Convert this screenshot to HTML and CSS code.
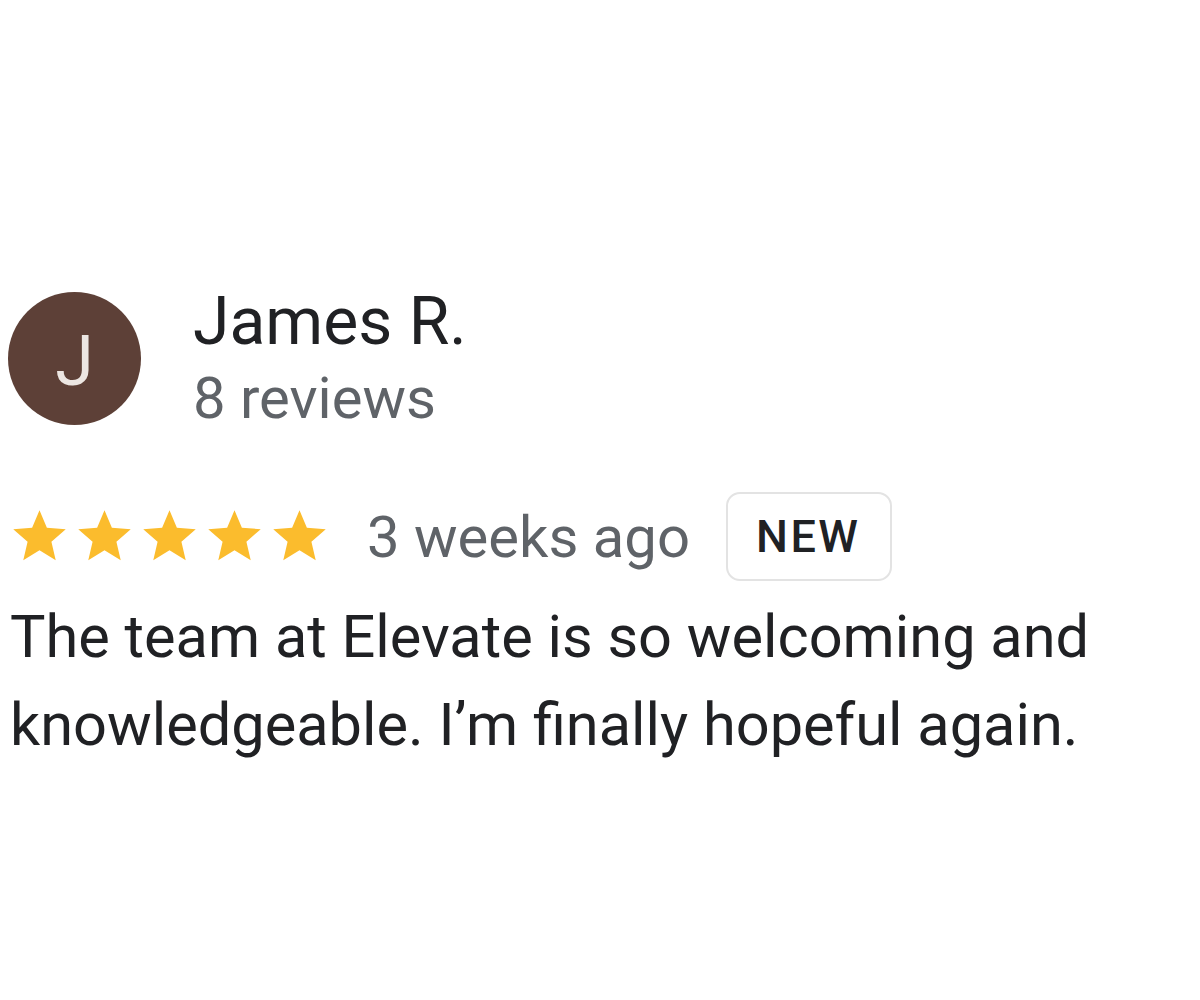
FILE: index.html
```html
<!DOCTYPE html>
<html>
<head>
<meta charset="utf-8">
<link rel="stylesheet" href="styles.css">
</head>
<body>
<div class="review">
  <div class="author">
    <div class="avatar">J</div>
    <div class="author-info">
      <div class="name">James R.</div>
      <div class="count">8 reviews</div>
    </div>
  </div>
  <div class="meta">
    <div class="stars">
      <svg class="star" viewBox="0 0 24 24"><path d="M12 17.27L18.18 21l-1.64-7.03L22 9.24l-7.19-.61L12 2 9.19 8.63 2 9.24l5.46 4.73L5.82 21z"/></svg>
      <svg class="star" viewBox="0 0 24 24"><path d="M12 17.27L18.18 21l-1.64-7.03L22 9.24l-7.19-.61L12 2 9.19 8.63 2 9.24l5.46 4.73L5.82 21z"/></svg>
      <svg class="star" viewBox="0 0 24 24"><path d="M12 17.27L18.18 21l-1.64-7.03L22 9.24l-7.19-.61L12 2 9.19 8.63 2 9.24l5.46 4.73L5.82 21z"/></svg>
      <svg class="star" viewBox="0 0 24 24"><path d="M12 17.27L18.18 21l-1.64-7.03L22 9.24l-7.19-.61L12 2 9.19 8.63 2 9.24l5.46 4.73L5.82 21z"/></svg>
      <svg class="star" viewBox="0 0 24 24"><path d="M12 17.27L18.18 21l-1.64-7.03L22 9.24l-7.19-.61L12 2 9.19 8.63 2 9.24l5.46 4.73L5.82 21z"/></svg>
    </div>
    <span class="time">3 weeks ago</span>
    <span class="badge">NEW</span>
  </div>
  <p class="text">The team at Elevate is so welcoming and knowledgeable. I’m finally hopeful again.</p>
</div>
</body>
</html>
```
FILE: styles.css
```css
html, body {
  margin: 0;
  padding: 0;
  background: #ffffff;
}
body {
  font-family: Roboto, "Liberation Sans", sans-serif;
  width: 1200px;
  height: 1000px;
  overflow: hidden;
}
.review {
  padding: 292px 0 0 8px;
}
.author {
  display: flex;
  align-items: flex-start;
  gap: 52px;
}
.avatar {
  width: 133px;
  height: 133px;
  border-radius: 50%;
  background: #5d4037;
  color: #ece6e2;
  font-size: 70px;
  padding-top: 4px;
  box-sizing: border-box;
  display: flex;
  align-items: center;
  justify-content: center;
  flex-shrink: 0;
}
.author-info {
  display: flex;
  flex-direction: column;
}
.name {
  font-size: 66px;
  line-height: 60px;
  color: #202124;
}
.count {
  font-size: 58px;
  line-height: 68px;
  margin-top: 12px;
  color: #5f6368;
}
.meta {
  display: flex;
  align-items: center;
  margin-top: 60px;
}
.stars {
  display: flex;
  gap: 2px;
}
.star {
  width: 63px;
  height: 63px;
  fill: #fbbc2d;
}
.time {
  font-size: 58px;
  color: #5f6368;
  margin-left: 36px;
}
.badge {
  margin-left: 36px;
  border: 2px solid #e3e3e3;
  border-radius: 14px;
  padding: 0 30px 0 28px;
  height: 85px;
  display: flex;
  align-items: center;
  font-size: 45px;
  font-weight: 500;
  letter-spacing: 2.5px;
  color: #202124;
}
.text {
  margin: 12px 0 0 2px;
  font-size: 59.5px;
  line-height: 88px;
  color: #202124;
  width: 1120px;
}
```
